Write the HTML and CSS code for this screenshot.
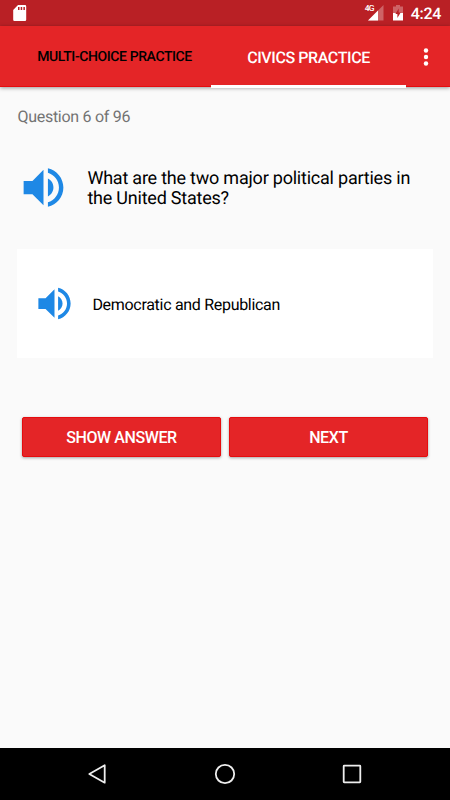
FILE: index.html
```
<!DOCTYPE html>
<html lang="en">

<head>
    <meta charset="UTF-8">
    <meta name="viewport" content="width=device-width, initial-scale=1.0">
    <title>Civics Practice</title>
    <link rel="stylesheet" href="styles.css">
</head>

<body>
    <!-- shared speaker icon -->
    <svg class="defs" width="0" height="0">
        <symbol id="volume" viewBox="0 0 24 24">
            <path d="M3 9v6h4l5 5V4L7 9H3zm13.5 3c0-1.77-1.02-3.29-2.5-4.03v8.05c1.48-.73 2.5-2.25 2.5-4.02zM14 3.23v2.06c2.89.86 5 3.54 5 6.71s-2.11 5.85-5 6.71v2.06c4.01-.91 7-4.49 7-8.77s-2.99-7.86-7-8.77z"/>
        </symbol>
    </svg>

    <div class="status-bar">
        <svg class="sd-card" width="14" height="17" viewBox="0 0 14 17">
            <path fill="#fff" d="M5 0h7a1.2 1.2 0 0 1 1.2 1.2v13.6A1.2 1.2 0 0 1 12 16H1.400A1.200 1.200 0 0 1 .2 14.800V5z"/>
            <path fill="#b92025" d="M5 2h1.500v3H5zM7.700 2h1.500v3H7.700zM10.400 2h1.500v3h-1.500z"/>
        </svg>
        <div class="status-icons">
            <span class="network">4G</span>
            <svg class="signal" width="16" height="16" viewBox="0 0 16 16">
                <path fill="#fff" fill-opacity=".3" d="M15.500 0v15.500H0z"/>
                <path fill="#fff" d="M10 5.500v10H0z"/>
            </svg>
            <svg class="battery" width="10" height="16" viewBox="0 0 10 16">
                <path fill="#fff" fill-opacity=".3" d="M3 0h4v1.500h3V8H0V1.500h3z"/>
                <path fill="#fff" d="M0 8h10v7.500H0z"/>
                <path fill="#b92025" d="M5.700 3.500v4h2L4.400 13V9h-2z"/>
            </svg>
            <span class="clock">4:24</span>
        </div>
    </div>

    <div class="tab-bar">
        <div class="tab first">MULTI-CHOICE PRACTICE</div>
        <div class="tab active">CIVICS PRACTICE</div>
        <div class="menu">
            <svg width="6" height="20" viewBox="0 0 6 20" fill="#fff">
                <circle cx="3" cy="3.500" r="2.200"/>
                <circle cx="3" cy="10" r="2.200"/>
                <circle cx="3" cy="16.500" r="2.200"/>
            </svg>
        </div>
    </div>

    <div class="content">
        <div class="counter">Question 6 of 96</div>
        <div class="question">
            <svg class="speaker"><use href="#volume"/></svg>
            <p>What are the two major political parties in<br>the United States?</p>
        </div>
        <div class="answer">
            <svg class="speaker small"><use href="#volume"/></svg>
            <p>Democratic and Republican</p>
        </div>
        <div class="buttons">
            <button>SHOW ANSWER</button>
            <button>NEXT</button>
        </div>
    </div>

    <div class="nav-bar">
        <svg class="back" width="24" height="24" viewBox="0 0 24 24"><path d="M17.700 3.300v17.400L2.300 12z"/></svg>
        <svg width="24" height="24" viewBox="0 0 24 24"><circle cx="12" cy="12" r="9.200"/></svg>
        <svg width="24" height="24" viewBox="0 0 24 24"><rect x="3.700" y="3.700" width="16.600" height="16.600" rx=".5"/></svg>
    </div>
</body>

</html>
```
FILE: styles.css
```
* {
    margin: 0;
    padding: 0;
    box-sizing: border-box;
}

body {
    width: 450px;
    height: 800px;
    overflow: hidden;
    display: flex;
    flex-direction: column;
    background: #fafafa;
    font-family: Roboto, sans-serif;
    text-rendering: geometricPrecision;
    color: #000;
}

.defs {
    position: absolute;
}

/* status bar */
.status-bar {
    height: 26px;
    background: #b92025;
    display: flex;
    justify-content: space-between;
    padding: 5px 9px 0 13px;
    color: #fff;
}

.status-icons {
    display: flex;
}

.network {
    font-size: 8.5px;
    line-height: 9px;
    font-weight: 500;
    letter-spacing: -0.8px;
    margin-right: -6px;
}

.battery {
    margin-left: 9px;
}

.clock {
    font-size: 16px;
    line-height: 18px;
    font-weight: 500;
    letter-spacing: -0.3px;
    margin-left: 8px;
}

/* tabs */
.tab-bar {
    position: relative;
    height: 61px;
    background: #e42527;
    display: flex;
    border-bottom: 1px solid #e60c0e;
    box-shadow: 0 1px 4px rgba(0, 0, 0, 0.4);
}

.tab {
    width: 195px;
    height: 62px;
    line-height: 64px;
    text-align: center;
    white-space: nowrap;
    font-size: 16px;
    font-weight: 500;
    letter-spacing: -0.4px;
}

.tab.first {
    width: 211px;
    padding-left: 18px;
    font-size: 14px;
    line-height: 63px;
}

.tab.active {
    color: #fff;
    border-bottom: 3px solid #fff;
}

.menu {
    padding: 21px 0 0 17px;
}

/* question */
.content {
    flex: 1;
    padding: 20px 17px 0 17.4px;
}

.counter {
    height: 20px;
    line-height: 20px;
    font-size: 16px;
    letter-spacing: -0.27px;
    color: #737373;
}

.question {
    display: flex;
    align-items: center;
    margin-top: 33px;
    height: 55px;
}

.speaker {
    width: 53px;
    height: 53px;
    fill: #1e88e5;
}

.question p {
    margin-left: 17px;
    padding-top: 3px;
    font-size: 18px;
    line-height: 20px;
    letter-spacing: -0.22px;
}

.answer {
    display: flex;
    align-items: center;
    height: 109px;
    margin-top: 34px;
    padding-left: 16px;
    background: #fff;
}

.small {
    width: 43px;
    height: 43px;
}

.answer p {
    margin-left: 16px;
    padding-top: 1px;
    font-size: 16px;
    letter-spacing: -0.3px;
}

.buttons {
    display: flex;
    gap: 8px;
    padding: 0 5px 0 4.6px;
    margin-top: 59px;
}

.buttons button {
    flex: 1;
    height: 40px;
    padding-top: 1px;
    border: 1px solid #e60c0e;
    border-radius: 2px;
    background: #e42527;
    box-shadow: 0 1px 3px rgba(0, 0, 0, 0.35);
    color: #fff;
    font-family: inherit;
    font-size: 16px;
    font-weight: 500;
    letter-spacing: -0.4px;
}

/* navigation */
.nav-bar {
    height: 52px;
    background: #000;
    display: flex;
    justify-content: center;
    align-items: center;
    gap: 103px;
}

.nav-bar svg {
    fill: none;
    stroke: #eee;
    stroke-width: 1.8;
    stroke-linejoin: round;
}

.nav-bar .back {
    margin: 0 -1px 0 1px;
}
```
